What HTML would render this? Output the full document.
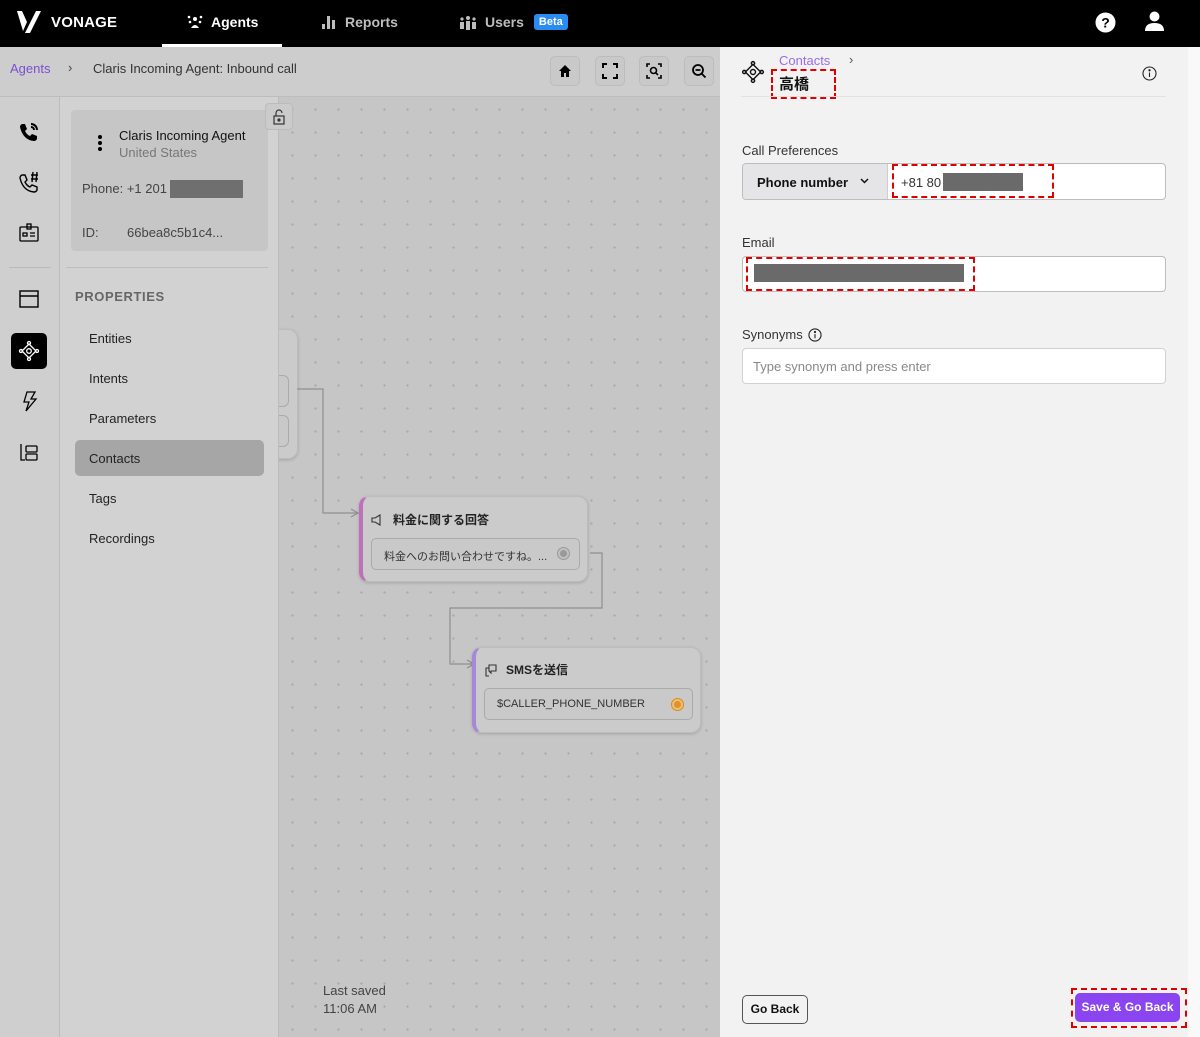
<!DOCTYPE html>
<html><head><meta charset="utf-8">
<style>
*{box-sizing:border-box;margin:0;padding:0}
body{width:1200px;height:1037px;overflow:hidden;font-family:"Liberation Sans","Noto Sans CJK JP",sans-serif;background:#c7c7c7;position:relative;color:#111}
.abs{position:absolute}
#top{left:0;top:0;width:1200px;height:47px;background:#000;color:#fff}
#top .nav{position:absolute;top:14px;font-size:14px;font-weight:bold;display:flex;align-items:center;gap:8px}
#sub{left:0;top:47px;width:720px;height:50px;background:#cdcdcd;border-bottom:1px solid #bdbdbd}
.tb{position:absolute;top:9px;width:30px;height:30px;border:1px solid #bcbcbc;border-radius:5px;background:#c9c9c9;display:flex;align-items:center;justify-content:center}
#side{left:0;top:97px;width:60px;height:940px;background:#cfcfcf;border-right:1px solid #bcbcbc}
#panel{left:60px;top:97px;width:219px;height:940px;background:#d2d2d2;border-right:1px solid #bcbcbc}
#canvas{left:279px;top:97px;width:441px;height:940px;overflow:hidden;background-color:#c6c6c6;background-image:radial-gradient(circle,#a9a9a9 0.9px,transparent 1.4px);background-size:23px 23px;background-position:2px 1px}
.ico{position:absolute;left:18px}
.prop{position:absolute;left:89px;font-size:13px;color:#222}
#right{left:720px;top:47px;width:480px;height:990px;background:#f2f2f2}
.red{position:absolute;border:2px dashed #e00000}
.node{position:absolute;background:#cbcbcb;border-radius:10px;box-shadow:0 1px 3px rgba(0,0,0,.18);border:1px solid #bdbdbd}
.inp{position:absolute;border:1px solid #aaa;border-radius:5px;background:#c9c9c9;font-size:11px;color:#333}
</style></head><body>

<div id="top" class="abs">
  <svg class="abs" style="left:16px;top:10px" width="26" height="24" viewBox="0 0 26 24"><path d="M1 1h5l5 11-4 9z" fill="#fff"/><path d="M20 1h5L14 23h-5z" fill="#fff"/></svg>
  <div class="abs" style="left:51px;top:14px;font-size:15px;font-weight:bold;letter-spacing:0.2px">VONAGE</div>
  <div class="nav" style="left:187px"><svg width="16" height="14" viewBox="0 0 16 14"><circle cx="8" cy="4" r="2" fill="#fff"/><circle cx="2" cy="2" r="1.3" fill="#fff"/><circle cx="14" cy="2" r="1.3" fill="#fff"/><circle cx="3" cy="7" r="1.3" fill="#fff"/><circle cx="13" cy="7" r="1.3" fill="#fff"/><path d="M4 13q4-6 8 0z" fill="#fff"/></svg>Agents</div>
  <div class="abs" style="left:162px;top:44px;width:120px;height:3px;background:#fff"></div>
  <div class="nav" style="left:321px;color:#bdbdbd"><svg width="16" height="14" viewBox="0 0 16 14"><rect x="1" y="9" width="3" height="5" fill="#bdbdbd"/><rect x="6" y="1" width="3" height="13" fill="#bdbdbd"/><rect x="11" y="5" width="3" height="9" fill="#bdbdbd"/></svg>Reports</div>
  <div class="nav" style="left:459px;color:#bdbdbd"><svg width="18" height="15" viewBox="0 0 18 15"><circle cx="9" cy="3" r="2" fill="#bdbdbd"/><circle cx="3" cy="4" r="1.6" fill="#bdbdbd"/><circle cx="15" cy="4" r="1.6" fill="#bdbdbd"/><rect x="7" y="6" width="4" height="9" fill="#bdbdbd"/><rect x="1" y="7" width="4" height="7" fill="#bdbdbd"/><rect x="13" y="7" width="4" height="7" fill="#bdbdbd"/></svg>Users<span style="background:#2a8cf0;color:#fff;font-size:11px;padding:2px 5px;border-radius:3px;margin-left:2px">Beta</span></div>
  <svg class="abs" style="left:1095px;top:12px" width="21" height="21" viewBox="0 0 21 21"><circle cx="10.5" cy="10.5" r="10" fill="#fff"/><text x="10.5" y="15.5" text-anchor="middle" font-size="14" font-weight="bold" font-family="Liberation Sans" fill="#000">?</text></svg>
  <svg class="abs" style="left:1144px;top:11px" width="21" height="21" viewBox="0 0 21 21"><circle cx="10.5" cy="5.5" r="5" fill="#fff"/><path d="M1 20q0-8 9.5-8t9.5 8z" fill="#fff"/></svg>
</div>

<div id="sub" class="abs">
  <div class="abs" style="left:10px;top:14px;font-size:13px;color:#7b4fd0">Agents</div>
  <div class="abs" style="left:68px;top:13px;font-size:13px;color:#444">›</div>
  <div class="abs" style="left:93px;top:14px;font-size:13px;color:#333">Claris Incoming Agent: Inbound call</div>
  <div class="tb" style="left:550px"><svg width="14" height="14" viewBox="0 0 14 14"><path d="M7 1L1 7h2v6h3v-4h2v4h3V7h2z" fill="#000"/></svg></div>
  <div class="tb" style="left:595px"><svg width="16" height="16" viewBox="0 0 16 16" fill="none" stroke="#000" stroke-width="2"><path d="M1 5V1h4M11 1h4v4M15 11v4h-4M5 15H1v-4"/></svg></div>
  <div class="tb" style="left:639px"><svg width="16" height="16" viewBox="0 0 16 16" fill="none" stroke="#000" stroke-width="1.6"><path d="M1 4V1h3M12 1h3v3M15 12v3h-3M4 15H1v-3"/><circle cx="7.5" cy="7.5" r="3"/><path d="M10 10l2 2"/></svg></div>
  <div class="tb" style="left:684px"><svg width="16" height="16" viewBox="0 0 16 16" fill="none" stroke="#000" stroke-width="1.8"><circle cx="7" cy="7" r="5"/><path d="M4.5 7h5M11 11l3.5 3.5"/></svg></div>
</div>

<div id="side" class="abs">
  <svg class="ico" style="top:24px" width="22" height="22" viewBox="0 0 22 22"><path d="M4 3l3 0 2 5-2 2q2 4 5 5l2-2 5 2v3q-1 2-3 2Q5 19 2 6q0-2 2-3z" fill="#000"/><path d="M13 3a6 6 0 0 1 6 6M13 6a3 3 0 0 1 3 3" stroke="#000" stroke-width="2" fill="none"/></svg>
  <svg class="ico" style="top:74px" width="22" height="22" viewBox="0 0 22 22" fill="none" stroke="#000" stroke-width="1.4"><path d="M4 4l3 0 2 5-2 2q2 4 5 5l2-2 5 2v3q-1 2-3 2Q5 20 2 7q0-2 2-3z"/><path d="M13 4h7M13 8h7M15 1l-1 10M19 1l-1 10"/></svg>
  <svg class="ico" style="top:125px" width="22" height="22" viewBox="0 0 22 22" fill="none" stroke="#000" stroke-width="1.3"><rect x="2" y="5" width="18" height="14" rx="1"/><rect x="9" y="2" width="4" height="5"/><rect x="5" y="11" width="4" height="3"/><path d="M12 11h5M12 14h5"/></svg>
  <div class="abs" style="left:9px;top:170px;width:42px;height:1px;background:#b9b9b9"></div>
  <svg class="ico" style="top:191px" width="22" height="22" viewBox="0 0 22 22" fill="none" stroke="#000" stroke-width="1.4"><rect x="2" y="3" width="18" height="16"/><path d="M2 8h18"/></svg>
  <div class="abs" style="left:11px;top:236px;width:36px;height:36px;background:#000;border-radius:5px"></div>
  <svg class="ico" style="top:243px;left:18px" width="22" height="22" viewBox="0 0 22 22" fill="none" stroke="#fff" stroke-width="1.3"><path d="M11 4l7 7-7 7-7-7z"/><circle cx="11" cy="11" r="2.3"/><circle cx="11" cy="3" r="1.5"/><circle cx="11" cy="19" r="1.5"/><circle cx="3" cy="11" r="1.5"/><circle cx="19" cy="11" r="1.5"/></svg>
  <svg class="ico" style="top:293px" width="22" height="22" viewBox="0 0 22 22" fill="none" stroke="#000" stroke-width="1.3"><path d="M9 2h8l-4 7h5L8 21l3-9H6z"/></svg>
  <svg class="ico" style="top:345px" width="22" height="22" viewBox="0 0 22 22" fill="none" stroke="#000" stroke-width="1.3"><path d="M3 2v16h4"/><rect x="8" y="4" width="11" height="6" rx="1"/><rect x="8" y="12" width="11" height="6" rx="1"/></svg>
</div>

<div id="canvas" class="abs">
  <div class="node" style="left:-40px;top:232px;width:59px;height:130px"></div>
  <div class="abs" style="left:-20px;top:278px;width:30px;height:32px;border:1px solid #aaa;border-radius:6px;background:#c9c9c9"></div>
  <div class="abs" style="left:-20px;top:318px;width:30px;height:32px;border:1px solid #aaa;border-radius:6px;background:#c9c9c9"></div>
  <svg class="abs" style="left:0;top:0" width="441" height="940" fill="none" stroke="#8f8f8f" stroke-width="1.2">
    <path d="M18 292h26v124h34"/><path d="M72 412l7 4-7 4"/>
    <path d="M311 456h12v55H171v56h24"/><path d="M188 563l7 4-7 4"/>
  </svg>
  <div class="node" style="left:80px;top:399px;width:229px;height:86px;border-left:4px solid #c070b8"></div>
  <svg class="abs" style="left:92px;top:416px" width="14" height="14" viewBox="0 0 14 14" fill="none" stroke="#333" stroke-width="1.1"><path d="M1 5h3l5-3v10L4 9H1z"/></svg>
  <div class="abs" style="left:114px;top:414px;font-size:12px;font-weight:bold;color:#222">料金に関する回答</div>
  <div class="inp" style="left:92px;top:441px;width:209px;height:32px"><span class="abs" style="left:12px;top:9px">料金へのお問い合わせですね。...</span><span class="abs" style="left:186px;top:9px;width:11px;height:11px;border-radius:6px;background:#999;border:2px solid #c0c0c0;box-shadow:0 0 0 1px #999"></span></div>
  <div class="node" style="left:193px;top:550px;width:229px;height:86px;border-left:4px solid #a887d8"></div>
  <svg class="abs" style="left:205px;top:566px" width="14" height="14" viewBox="0 0 14 14" fill="none" stroke="#333" stroke-width="1.1"><path d="M5 13H2V5h3M5 2h7v6H7v2L5 8V2z"/></svg>
  <div class="abs" style="left:227px;top:564px;font-size:12px;font-weight:bold;color:#222">SMSを送信</div>
  <div class="inp" style="left:205px;top:591px;width:209px;height:32px"><span class="abs" style="left:12px;top:9px">$CALLER_PHONE_NUMBER</span><span class="abs" style="left:187px;top:10px;width:11px;height:11px;border-radius:6px;background:#e0922a;border:2px solid #ecc070;box-shadow:0 0 0 1px #d98b20"></span></div>
  <div class="abs" style="left:44px;top:885px;font-size:13px;color:#444;line-height:18px">Last saved<br>11:06 AM</div>
</div>

<div id="panel" class="abs">
  <div class="abs" style="left:11px;top:13px;width:197px;height:141px;background:#c6c6c6;border-radius:4px"></div>
  <div class="abs" style="left:38px;top:38px;width:4px;height:4px;border-radius:2px;background:#000;box-shadow:0 6px 0 #000,0 12px 0 #000"></div>
  <div class="abs" style="left:59px;top:31px;font-size:13px;color:#111">Claris Incoming Agent</div>
  <div class="abs" style="left:59px;top:48px;font-size:13px;color:#777">United States</div>
  <div class="abs" style="left:22px;top:84px;font-size:13px;color:#444">Phone: +1 201</div>
  <div class="abs" style="left:110px;top:83px;width:73px;height:18px;background:#6f6f6f"></div>
  <div class="abs" style="left:22px;top:128px;font-size:13px;color:#444">ID:</div>
  <div class="abs" style="left:67px;top:128px;font-size:13px;color:#444">66bea8c5b1c4...</div>
  <div class="abs" style="left:6px;top:170px;width:202px;height:1px;background:#bdbdbd"></div>
  <div class="abs" style="left:15px;top:192px;font-size:13px;color:#666;font-weight:bold;letter-spacing:0.6px">PROPERTIES</div>
  <div class="prop" style="left:29px;top:234px">Entities</div>
  <div class="prop" style="left:29px;top:274px">Intents</div>
  <div class="prop" style="left:29px;top:314px">Parameters</div>
  <div class="abs" style="left:15px;top:343px;width:189px;height:36px;background:#a6a6a6;border-radius:5px"></div>
  <div class="prop" style="left:29px;top:354px">Contacts</div>
  <div class="prop" style="left:29px;top:394px">Tags</div>
  <div class="prop" style="left:29px;top:434px">Recordings</div>
  <div class="abs" style="left:205px;top:6px;width:28px;height:27px;background:#cbcbcb;border:1px solid #bbb;border-radius:4px"></div>
  <svg class="abs" style="left:212px;top:12px" width="14" height="16" viewBox="0 0 14 16" fill="none" stroke="#333" stroke-width="1.2"><rect x="2" y="7" width="10" height="8"/><path d="M4 7V4a3 3 0 0 1 6 0"/><circle cx="7" cy="11" r="1" fill="#333"/></svg>
</div>

<div id="right" class="abs">
  <div class="abs" style="left:468px;top:0;width:12px;height:990px;background:#f9f9f9"></div>
  <svg class="abs" style="left:21px;top:13px" width="24" height="24" viewBox="0 0 22 22" fill="none" stroke="#111" stroke-width="1.3"><path d="M11 4l7 7-7 7-7-7z"/><circle cx="11" cy="11" r="2.3"/><circle cx="11" cy="3" r="1.5"/><circle cx="11" cy="19" r="1.5"/><circle cx="3" cy="11" r="1.5"/><circle cx="19" cy="11" r="1.5"/></svg>
  <div class="abs" style="left:59px;top:6px;font-size:13px;color:#9a6ce8">Contacts</div>
  <div class="abs" style="left:129px;top:5px;font-size:13px;color:#555">›</div>
  <div class="red" style="left:51px;top:22px;width:65px;height:30px"></div>
  <div class="abs" style="left:59px;top:26px;font-size:15px;font-weight:bold;color:#111">高橋</div>
  <svg class="abs" style="left:422px;top:19px" width="15" height="15" viewBox="0 0 15 15" fill="none" stroke="#222" stroke-width="1.1"><circle cx="7.5" cy="7.5" r="6.5"/><path d="M7.5 6.5v4.5"/><circle cx="7.5" cy="4.3" r="0.6" fill="#222"/></svg>
  <div class="abs" style="left:21px;top:49px;width:425px;height:1px;background:#e2e2e2"></div>
  <div class="abs" style="left:22px;top:96px;font-size:13px;color:#333">Call Preferences</div>
  <div class="abs" style="left:22px;top:116px;width:424px;height:37px;border:1px solid #bdbdbd;border-radius:4px;background:#fff;overflow:hidden">
    <div class="abs" style="left:0;top:0;width:145px;height:37px;background:#e5e5e8;border-right:1px solid #cfcfcf"></div>
    <div class="abs" style="left:14px;top:11px;font-size:13px;font-weight:bold;color:#111">Phone number</div>
    <svg class="abs" style="left:117px;top:14px" width="9" height="6" viewBox="0 0 9 6" fill="none" stroke="#111" stroke-width="1.5"><path d="M1 1l3.5 3.5L8 1"/></svg>
    <div class="abs" style="left:158px;top:11px;font-size:13px;color:#333">+81 80</div>
    <div class="abs" style="left:200px;top:9px;width:80px;height:18px;background:#6a6a6a"></div>
  </div>
  <div class="red" style="left:172px;top:117px;width:162px;height:34px"></div>
  <div class="abs" style="left:22px;top:188px;font-size:13px;color:#333">Email</div>
  <div class="abs" style="left:22px;top:209px;width:424px;height:36px;border:1px solid #bdbdbd;border-radius:4px;background:#fff"></div>
  <div class="abs" style="left:34px;top:217px;width:210px;height:18px;background:#6a6a6a"></div>
  <div class="red" style="left:26px;top:210px;width:229px;height:34px"></div>
  <div class="abs" style="left:22px;top:280px;font-size:13px;color:#333">Synonyms</div>
  <svg class="abs" style="left:88px;top:281px" width="14" height="14" viewBox="0 0 15 15" fill="none" stroke="#222" stroke-width="1.2"><circle cx="7.5" cy="7.5" r="6.5"/><path d="M7.5 6.5v4.5"/><circle cx="7.5" cy="4.3" r="0.6" fill="#222"/></svg>
  <div class="abs" style="left:22px;top:301px;width:424px;height:36px;border:1px solid #d2d2d2;border-radius:4px;background:#fff"></div>
  <div class="abs" style="left:33px;top:312px;font-size:13px;color:#888">Type synonym and press enter</div>
  <div class="abs" style="left:22px;top:948px;width:66px;height:29px;border:1px solid #555;border-radius:5px;background:#f2f2f2;font-size:12px;font-weight:bold;text-align:center;line-height:27px;color:#111">Go Back</div>
  <div class="red" style="left:351px;top:941px;width:116px;height:40px"></div>
  <div class="abs" style="left:355px;top:946px;width:105px;height:29px;background:#8a44f0;border-radius:5px;font-size:12px;font-weight:bold;color:#fff;text-align:center;line-height:29px">Save &amp; Go Back</div>
</div>
</body></html>
